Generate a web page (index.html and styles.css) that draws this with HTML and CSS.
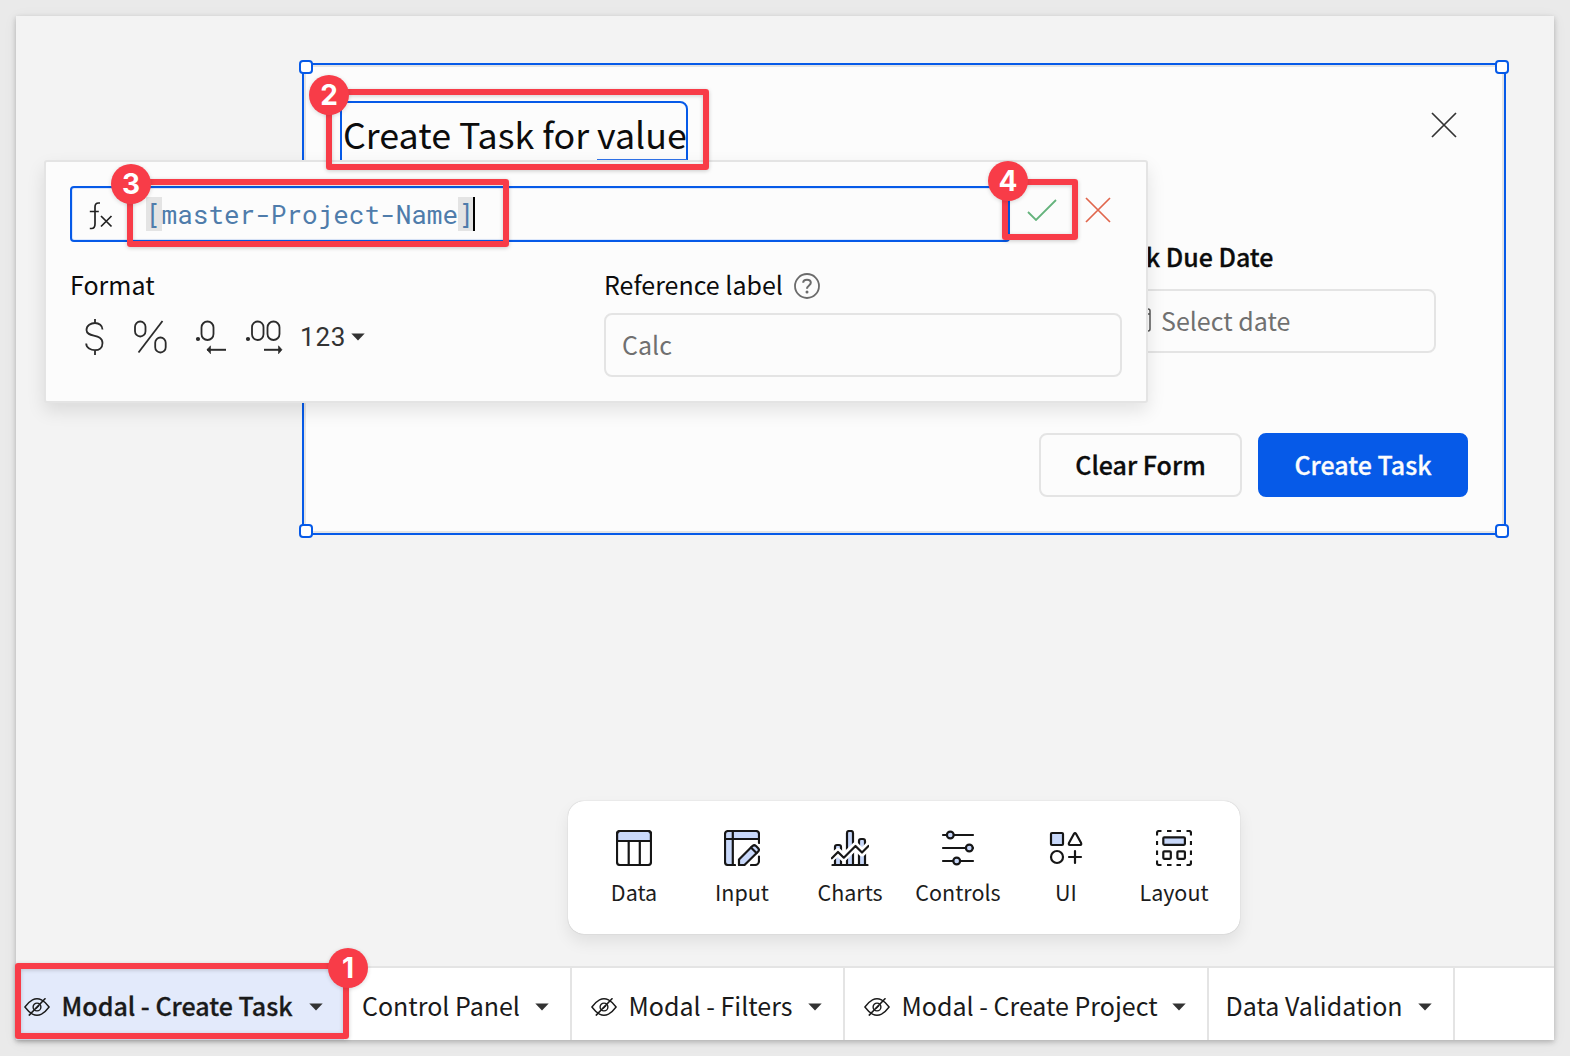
FILE: index.html
```html
<!DOCTYPE html>
<html lang="en">
<head>
<meta charset="utf-8">
<title>Modal - Create Task</title>
<link rel="stylesheet" href="styles.css">
</head>
<body>
<svg width="0" height="0" class="defs">
  <symbol id="hidden" viewBox="0 0 26 18"><g fill="none" stroke="currentColor" stroke-width="1.4"><path d="M.9 9C4 4.8 6 3.2 8.500 1.900Q13-.3 17.500 1.900C20 3.200 22 4.800 25.100 9C22 13.200 20 14.800 17.500 16.100Q13 18.300 8.500 16.100C6 14.800 4 13.200.9 9Z"/><circle cx="13" cy="9" r="3.900"/><path d="M21.500.3 4.800 17.600" stroke-width="1.600"/><path d="M12 10.500 15 7.500"/></g></symbol>
  <symbol id="caret" viewBox="0 0 14 8"><path d="M.3.5h13.400L7 7.500Z" fill="#333"/></symbol>
  <symbol id="cross" viewBox="0 0 26 26"><path d="M1 1 25 25M25 1 1 25" fill="none" stroke="currentColor" stroke-width="1.700"/></symbol>
</svg>

<main class="window">
  <div class="canvas">
    <section class="modal">
      <header class="modal-head">
        <h1 class="title">Create Task for <span class="ref">value</span></h1>
        <svg class="close" viewBox="0 0 26 26"><use href="#cross"/></svg>
      </header>
      <div class="field due">
        <label class="field-label">Task Due Date</label>
        <div class="input date">
          <svg class="calendar" viewBox="0 0 24 24"><rect x="1" y="1" width="22" height="22" rx="2" fill="none" stroke="#555" stroke-width="1.500"/><path d="M1 6h22" stroke="#555" stroke-width="1.500"/></svg>
          <span class="date-text">Select date</span>
        </div>
      </div>
      <footer class="actions">
        <button class="btn">Clear Form</button>
        <button class="btn primary">Create Task</button>
      </footer>
      <i class="handle tl"></i><i class="handle tr"></i><i class="handle bl"></i><i class="handle br"></i>
    </section>

    <section class="popover">
      <div class="formula-row">
        <div class="formula">
          <svg class="fx" viewBox="0 0 24 28"><g fill="none" stroke="#222" stroke-width="1.700"><path d="M11 1H9.500Q6 1 6 5V22Q6 26.500 2.500 26.500H.8M.8 9.500H9.800"/><path d="M12 14 22.500 24.500M22.500 14 12 24.500"/></g></svg>
          <code class="code"><span class="bracket">[</span>master-Project-Name<span class="bracket">]</span></code><i class="cursor"></i>
        </div>
        <svg class="check" viewBox="0 0 30 22"><path d="M1 13 9 21 29 1" fill="none" stroke="#64b37c" stroke-width="1.800"/></svg>
        <svg class="cancel" viewBox="0 0 26 26"><use href="#cross"/></svg>
      </div>
      <div class="options">
        <div class="format">
          <span class="label">Format</span>
          <div class="format-row">
            <svg viewBox="0 0 300 40" class="format-icons" fill="none" stroke="#2b2b2b" stroke-width="1.800">
              <path d="M25 1V5.500M25 32V37M32.500 11.500C32.500 7.500 29 5 25 5S16.500 7.500 16.500 12C16.500 20 32.500 15 32.500 25C32.500 30 29 32.200 25 32.200S16.200 30 16.200 25.500"/>
              <rect x="65" y="3.500" width="10.500" height="15" rx="5.200"/><rect x="85.200" y="19.500" width="10.500" height="15" rx="5.200"/><path d="M92.500 3 68.500 34.500"/>
              <rect x="131.500" y="3.500" width="12" height="18.500" rx="6"/><circle cx="128" cy="21" r="1.200" fill="#2b2b2b"/><path d="M137 31.800H156" stroke-width="2"/><path d="M137 31.800 140.500 27.800V35.800Z" fill="#2b2b2b" stroke-width=".6"/>
              <rect x="182" y="3.500" width="11.500" height="18.500" rx="5.700"/><rect x="197.500" y="3.500" width="12" height="18.500" rx="6"/><circle cx="178" cy="21" r="1.200" fill="#2b2b2b"/><path d="M194 31.800H211" stroke-width="2"/><path d="M212 31.800 208.500 27.800V35.800Z" fill="#2b2b2b" stroke-width=".6"/>
            </svg>
            <span class="number">123</span><svg class="caret"><use href="#caret"/></svg>
          </div>
        </div>
        <div class="reference">
          <div class="label"><span>Reference label</span><svg class="help" viewBox="0 0 26 26"><circle cx="13" cy="13" r="12" fill="none" stroke="#6b6b6b" stroke-width="1.800"/><path d="M9.200 9.800C9.200 7.700 10.800 6.700 13 6.700S16.800 7.900 16.800 9.800C16.800 12.400 13 12.600 13 15.800" fill="none" stroke="#6b6b6b" stroke-width="2"/><circle cx="13" cy="19" r="1.500" fill="#6b6b6b"/></svg></div>
          <div class="input">Calc</div>
        </div>
      </div>
    </section>

    <nav class="toolbar">
      <div class="tool"><svg class="tool-icon" viewBox="0 0 36 36"><path d="M1 11V4a3 3 0 0 1 3-3H32a3 3 0 0 1 3 3V11Z" fill="#c8d8fa"/><rect x="1" y="1" width="34" height="34" rx="3"/><path d="M1 11H35M12.700 11V35M23.800 11V35"/></svg>Data</div>
      <div class="tool"><svg class="tool-icon" viewBox="0 0 36 36"><path d="M35 9V4a3 3 0 0 0-3-3H4a3 3 0 0 0-3 3V32a3 3 0 0 0 3 3H9V9Z" fill="#c8d8fa" stroke="none"/><path d="M35 13V4a3 3 0 0 0-3-3H4a3 3 0 0 0-3 3V32a3 3 0 0 0 3 3H11M8.800 1V35M1 9H35M35 26.500V31a4 4 0 0 1-4 4H27"/><path d="M15 35V29.500L28.700 15.800Q30.300 14.600 32 16L34.200 18.200Q35.600 19.800 34.200 21.500L20.500 35Z" fill="#c8d8fa"/><path d="M27 17.500 32.500 23"/></svg>Input</div>
      <div class="tool"><svg class="tool-icon charts" viewBox="0 0 38 36"><path d="M4 35V17q0-2 2-2h2q2 0 2 2V35ZM16 35V3q0-2 2-2h2q2 0 2 2V35ZM28 35V11q0-2 2-2h2q2 0 2 2V35Z" fill="#c8d8fa"/><path d="M0 28 7 22 12.500 27.500 24.500 16 31 22.500 38 15.500" stroke="#fff" stroke-width="7.500"/><path d="M.8 28.300 7 22 12.800 27.700 24.500 16 31 22.500 37.500 16M1.500 35H36.500"/></svg>Charts</div>
      <div class="tool"><svg class="tool-icon" viewBox="0 0 36 36"><path d="M3 5H33M3 18H33M3 31H33"/><g fill="#c8d8fa"><circle cx="10.300" cy="5" r="3.400"/><circle cx="29.300" cy="18" r="3.400"/><circle cx="16.700" cy="31" r="3.400"/></g></svg>Controls</div>
      <div class="tool"><svg class="tool-icon" viewBox="0 0 36 36"><rect x="3" y="3" width="12" height="12" rx="1" fill="#c8d8fa"/><path d="M26 3.800q1-1.600 2 0l5 9q.8 2-.8 2.200H22q-1.800-.2-.9-2.200ZM27 21V33M21 27H33"/><circle cx="9" cy="27" r="6"/></svg>UI</div>
      <div class="tool"><svg class="tool-icon" viewBox="0 0 36 36"><path d="M1 5.500V3q0-2 2-2H5.500M11 1H15.500M20.500 1H25M30.500 1H33q2 0 2 2V5.500M35 11V15M35 20.500V25M35 30.500V33q0 2-2 2H30.500M25 35H20.500M15.500 35H11M5.500 35H3q-2 0-2-2V30.500M1 25V20.500M1 15V11" stroke-linecap="butt"/><rect x="7.300" y="7.300" width="21.600" height="7.500" rx="1" fill="#c8d8fa"/><rect x="7.300" y="21.300" width="7.500" height="7.500" rx="1"/><rect x="21.400" y="21.300" width="7.500" height="7.500" rx="1"/></svg>Layout</div>
    </nav>
  </div>

  <nav class="tabs">
    <div class="tab active"><svg class="eye"><use href="#hidden"/></svg><span class="tab-name">Modal - Create Task</span><svg class="caret"><use href="#caret"/></svg></div>
    <div class="tab panel"><span class="tab-name">Control Panel</span><svg class="caret"><use href="#caret"/></svg></div>
    <div class="tab filters"><svg class="eye"><use href="#hidden"/></svg><span class="tab-name">Modal - Filters</span><svg class="caret"><use href="#caret"/></svg></div>
    <div class="tab project"><svg class="eye"><use href="#hidden"/></svg><span class="tab-name">Modal - Create Project</span><svg class="caret"><use href="#caret"/></svg></div>
    <div class="tab validation"><span class="tab-name">Data Validation</span><svg class="caret"><use href="#caret"/></svg></div>
  </nav>
</main>

<div class="callout c1"><b class="badge">1</b></div>
<div class="callout c2"><b class="badge">2</b></div>
<div class="callout c3"><b class="badge">3</b></div>
<div class="callout c4"><b class="badge">4</b></div>
</body>
</html>
```

FILE: styles.css
```css
* { box-sizing: border-box; }
body {
  margin: 0;
  padding: 16px;
  height: 1056px;
  overflow: hidden;
  position: relative;
  background: #eaeaea;
  color: #0c0c0c;
  font: 400 25px/36px "Noto Sans CJK SC", "Noto Sans", sans-serif;
}
.defs { position: absolute; }
svg { display: block; flex: none; }
.window {
  width: 1538px;
  height: 1024px;
  display: flex;
  flex-direction: column;
  background: #f3f3f3;
  box-shadow: 0 2px 5px rgba(0,0,0,.22), 0 2px 14px rgba(0,0,0,.06);
}
.canvas { flex: 1; position: relative; }

/* selected modal on the canvas */
.modal {
  position: absolute;
  left: 286px;
  top: 47px;
  width: 1204px;
  height: 472px;
  display: flex;
  flex-direction: column;
  padding: 36px;
  background: #fcfcfc;
  border: 2px solid #065ae8;
  box-shadow: inset 0 0 0 2px #e4e4e4;
}
.modal-head { display: flex; justify-content: space-between; height: 140px; }
.title {
  margin: 0;
  width: 348px;
  height: 72px;
  padding-left: 1px;
  border: 2px solid #065ae8;
  border-radius: 0 8px 0 0;
  font-size: 35.8px;
  font-weight: 400;
  line-height: 60px;
  white-space: nowrap;
}
.ref { display: inline-block; height: 58px; border-bottom: 2px solid #2e72ea; }
.close { width: 26px; height: 26px; margin: 11px 11px 0 0; color: #333; }
.field { width: 328px; }
.due { align-self: flex-end; margin-right: 32px; }
.field-label { display: block; height: 48px; margin-left: -2px; line-height: 30px; font-weight: 500; }
.input {
  display: flex;
  align-items: center;
  height: 64px;
  padding: 0 16px 2px;
  border: 2px solid #e4e4e4;
  border-radius: 8px;
  color: #707070;
}
.date { gap: 10px; padding-left: 17px; }
.calendar { width: 24px; height: 24px; }
.actions { display: flex; justify-content: flex-end; gap: 16px; margin-top: auto; }
.btn {
  width: 203px;
  height: 64px;
  padding: 0 0 2px;
  border: 2px solid #e4e4e4;
  border-radius: 8px;
  background: #fcfcfc;
  color: #0c0c0c;
  font: 500 25px/36px "Noto Sans CJK SC", "Noto Sans", sans-serif;
}
.primary { width: 210px; background: #065ae8; border-color: #065ae8; color: #fcfcfc; }
.field-label, .btn, .active .tab-name { -webkit-text-stroke: .3px currentColor; }
.handle { position: absolute; width: 14px; height: 14px; border: 2px solid #065ae8; border-radius: 4px; background: #fff; }
.tl { left: -5px; top: -5px; }
.tr { right: -5px; top: -5px; }
.bl { left: -5px; bottom: -5px; }
.br { right: -5px; bottom: -5px; }

/* formula editor */
.popover {
  position: absolute;
  left: 28px;
  top: 144px;
  width: 1104px;
  height: 243px;
  padding: 24px;
  background: #fcfcfc;
  border: 2px solid #e4e4e4;
  border-radius: 3px;
  box-shadow: 0 8px 18px rgba(0,0,0,.1);
}
.formula-row { display: flex; }
.formula {
  display: flex;
  align-items: center;
  width: 940px;
  height: 56px;
  border: 2px solid #065ae8;
  border-radius: 4px;
  box-shadow: inset 0 0 0 1px #dce7fb;
}
.fx { width: 24px; height: 28px; margin: 3px 0 0 17px; }
.code {
  display: block;
  margin-left: 33px;
  color: #4f7cab;
  font: 26px/34px "Roboto Mono", "Liberation Mono", monospace;
}
.bracket { display: inline-block; height: 34px; background: #e4e4e4; }
.cursor { width: 2px; height: 34px; margin-left: -1px; background: #000; }
.check { width: 30px; height: 22px; margin: 13px 0 0 17px; }
.cancel { width: 26px; height: 26px; margin: 11px 0 0 28px; color: #e0664c; }
.options { display: flex; margin-top: 26px; }
.format { width: 534px; }
.label { display: flex; align-items: flex-start; height: 36px; line-height: 32px; }
.format-row { display: flex; align-items: center; margin-top: 13px; height: 40px; }
.format-icons { width: 300px; height: 40px; margin: 2px -70px 0 0; }
.number { font: 26px/40px Roboto, sans-serif; letter-spacing: .8px; color: #333; }
.caret { width: 14px; height: 8px; }
.number + .caret { margin-left: 5px; }
.reference { width: 518px; }
.help { width: 26px; height: 26px; margin: 5px 0 0 11px; }
.reference .input { margin-top: 9px; }

/* element toolbar */
.toolbar {
  position: absolute;
  left: 552px;
  top: 785px;
  display: flex;
  width: 672px;
  height: 133px;
  padding: 29px 12px 0;
  border-radius: 16px;
  background: #fff;
  box-shadow: 0 0 1px rgba(0,0,0,.3), 0 8px 16px rgba(0,0,0,.08);
}
.tool { display: flex; flex-direction: column; align-items: center; width: 108px; font-size: 21.5px; line-height: 32px; color: #1c1c1c; gap: 10px; }
.tool-icon { width: 36px; height: 36px; fill: none; stroke: #161616; stroke-width: 2.2; stroke-linejoin: round; stroke-linecap: round; }
.charts { width: 38px; }

/* page tabs */
.tabs { display: flex; height: 74px; border-top: 2px solid #e4e4e4; background: #fff; color: #1a1a1a; }
.tab { display: flex; align-items: center; padding: 6px 21px 0 18px; border-right: 2px solid #e4e4e4; white-space: nowrap; }
.tab-name { padding-bottom: 5px; }
.tab .caret { margin-left: auto; }
.eye { width: 26px; height: 18px; margin-right: 11.5px; }
.active { width: 328px; padding-left: 8px; background: #e3eafb; font-weight: 500; border: 0; }
.panel { width: 228px; }
.filters { width: 273px; padding-left: 19px; }
.project { width: 364px; padding-left: 19px; }
.validation { width: 246px; padding-left: 16.5px; }

/* numbered annotations */
.callout { position: absolute; border: 6px solid #f83c48; border-radius: 3px; box-shadow: 0 1px 4px rgba(0,0,0,.2), inset 0 1px 4px rgba(0,0,0,.18); }
.badge {
  position: absolute;
  width: 40px;
  height: 40px;
  border-radius: 50%;
  background: #f83c48;
  color: #fff;
  box-shadow: 0 1px 4px rgba(0,0,0,.15);
  font: 700 28px/40px Inter, sans-serif;
  text-align: center;
}
.c1 { left: 15px; top: 963px; width: 334px; height: 76px; }
.c1 .badge { right: -25px; top: -21px; }
.c2 { left: 326px; top: 89px; width: 383px; height: 81px; }
.c2 .badge { left: -23px; top: -20px; }
.c3 { left: 127px; top: 179px; width: 382px; height: 68px; }
.c3 .badge { left: -22px; top: -21px; }
.c4 { left: 1002px; top: 179px; width: 76px; height: 61px; }
.c4 .badge { left: -20px; top: -24.5px; }
```
